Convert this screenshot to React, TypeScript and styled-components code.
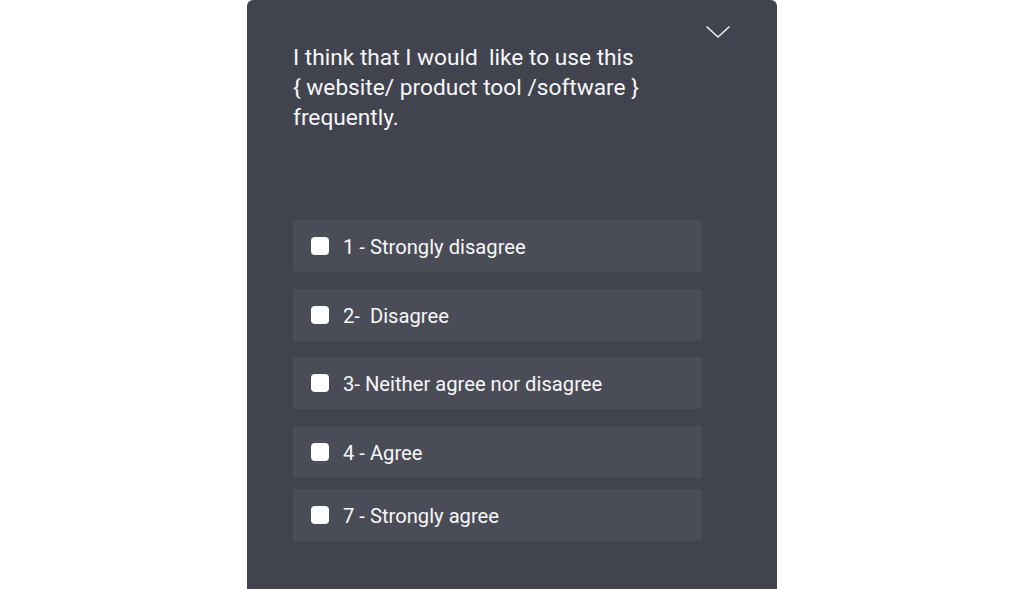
import React from "react";
import styled, { createGlobalStyle } from "styled-components";

const Global = createGlobalStyle`
  html, body { margin: 0; padding: 0; background: #ffffff; overflow: hidden; }
  body { font-family: Roboto, "Liberation Sans", sans-serif; }
`;

const Page = styled.div`
  display: flex;
  justify-content: center;
  min-height: 589px;
`;

const Panel = styled.section`
  position: relative;
  box-sizing: border-box;
  width: 530px;
  min-height: 589px;
  background: #41434f;
  border-radius: 6px 6px 0 0;
  padding: 43px 75px 48px 46px;
  display: flex;
  flex-direction: column;
`;

const Toggle = styled.button`
  position: absolute;
  top: 22px;
  right: 45px;
  width: 28px;
  height: 20px;
  padding: 0;
  border: 0;
  background: transparent;
  display: flex;
  align-items: center;
  justify-content: center;
  cursor: pointer;
`;

const Question = styled.h2`
  margin: 0;
  font-family: Roboto, "Liberation Sans", sans-serif;
  font-weight: 400;
  font-size: 22.7px;
  line-height: 30px;
  color: #f7f7f9;
  white-space: pre;
`;

const Options = styled.div`
  margin-top: 87px;
  display: flex;
  flex-direction: column;
`;

const Option = styled.label<{ $gap: number }>`
  box-sizing: border-box;
  height: 52px;
  margin-top: ${(p) => p.$gap}px;
  display: flex;
  align-items: center;
  gap: 14px;
  padding-left: 18px;
  background: #4a4c58;
  border-radius: 2px;
  cursor: pointer;
`;

const Box = styled.span`
  width: 18px;
  height: 18px;
  border-radius: 4px;
  background: #ffffff;
  flex: none;
`;

const OptionText = styled.span`
  font-family: Roboto, "Liberation Sans", sans-serif;
  font-size: 20.2px;
  color: #f7f7f9;
  white-space: pre;
  padding-top: 1px;
`;

const options = [
  { text: "1 - Strongly disagree", gap: 0 },
  { text: "2-  Disagree", gap: 17 },
  { text: "3- Neither agree nor disagree", gap: 16 },
  { text: "4 - Agree", gap: 17 },
  { text: "7 - Strongly agree", gap: 11 },
];

export default function App() {
  return (
    <>
      <Global />
      <Page>
        <Panel>
          <Toggle aria-label="Collapse">
            <svg width="26" height="14" viewBox="0 0 26 14" fill="none">
              <path d="M1.5 1.5 L13 12 L24.5 1.5" stroke="#f0f0f2" strokeWidth="1.6" />
            </svg>
          </Toggle>
          <Question>
            {"I think that I would  like to use this\n{ website/ product tool /software }\nfrequently."}
          </Question>
          <Options>
            {options.map((o) => (
              <Option key={o.text} $gap={o.gap}>
                <Box />
                <OptionText>{o.text}</OptionText>
              </Option>
            ))}
          </Options>
        </Panel>
      </Page>
    </>
  );
}
